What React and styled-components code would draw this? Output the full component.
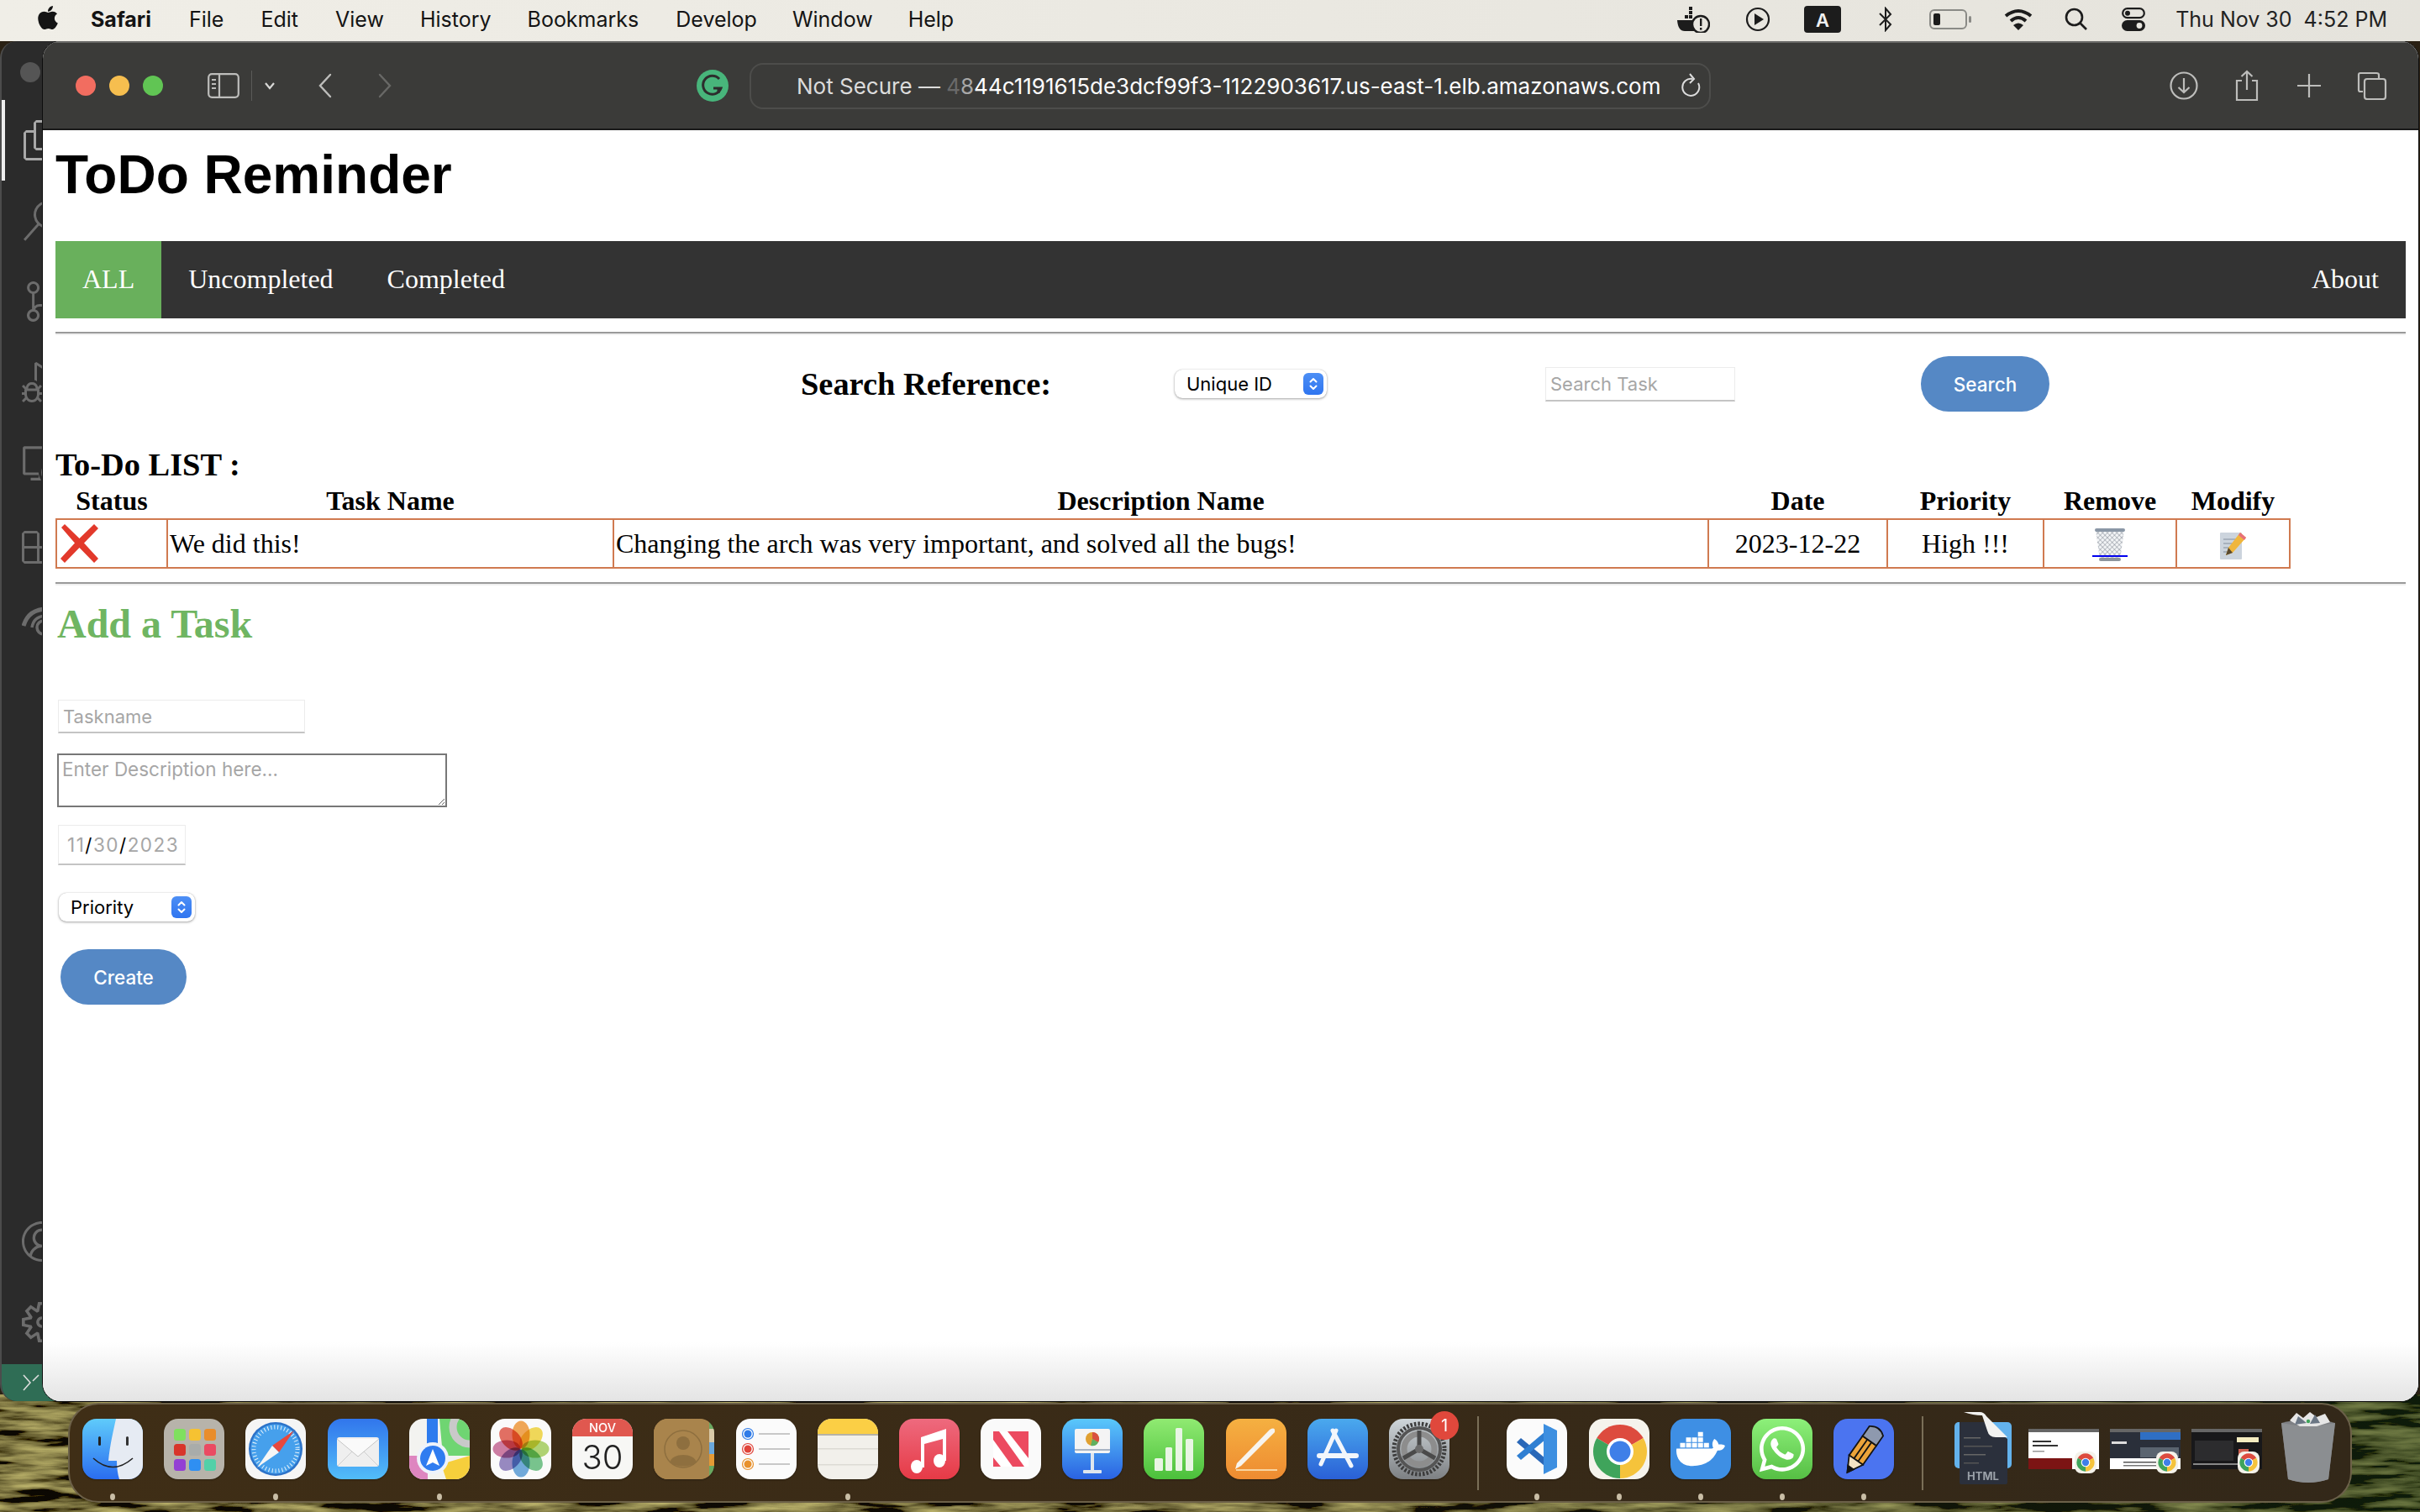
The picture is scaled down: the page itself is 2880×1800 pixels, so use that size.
import React from "react";
import styled, { createGlobalStyle } from "styled-components";
import { FaApple, FaDocker, FaWhatsapp } from "react-icons/fa";
import { VscFiles, VscSearch, VscSourceControl, VscDebugAlt, VscRemoteExplorer, VscExtensions, VscAccount, VscSettingsGear } from "react-icons/vsc";

const Global = createGlobalStyle`
  html, body { margin: 0; padding: 0; background: #2a2114; }
  * { box-sizing: border-box; }
`;

const SANS = `"Inter", "Liberation Sans", sans-serif`;
const SERIF = `"Liberation Serif", serif`;

const Desktop = styled.div`
  position: relative; width: 2880px; height: 1800px; overflow: hidden;
  display: flex; flex-direction: column; font-family: ${SERIF};
`;
const Wallpaper = styled.svg`position: absolute; left: 0; top: 0; width: 2880px; height: 1800px;`;

const MenuBar = styled.div`
  position: relative; z-index: 3; height: 49px; flex: none; display: flex; align-items: center;
  background: linear-gradient(to right, #f0eee7, #e5e3dc);
  padding: 0 39px 3px 41px; font: 400 25px ${SANS}; color: #141414;
`;
const AppleMark = styled.span`display: flex; margin-right: 35px; font-size: 32px; margin-top: -4px;`;
const MenuItem = styled.span`margin-right: ${p => p.$gap}px; font-weight: ${p => (p.$bold ? 700 : 400)}; white-space: nowrap;`;
const StatusArea = styled.div`margin-left: auto; display: flex; align-items: center; height: 100%;`;
const StatusIcon = styled.svg`display: block; margin-right: ${p => p.$gap}px; flex: none;`;
const Clock = styled.span`font-size: 25px; color: #222; white-space: pre; margin-left: 4px;`;

const CodeWindow = styled.div`
  position: absolute; left: 0; top: 49px; width: 120px; height: 1619px; z-index: 1;
  background: #2b2b2b; border-radius: 20px 0 0 20px; overflow: hidden; border-left: 2px solid #4c4c4c;
  display: flex; flex-direction: column;
`;
const CodeDot = styled.div`position: absolute; left: 22px; top: 25px; width: 24px; height: 24px; border-radius: 50%; background: #555;`;
const ActiveMark = styled.div`position: absolute; left: -2px; top: 70px; width: 6px; height: 96px; background: #eee;`;
const ActivityGroup = styled.div`display: flex; flex-direction: column; margin-top: ${p => p.$top}px;`;
const ActivityItem = styled.div`
  width: 96px; height: 96px; display: flex; align-items: center; justify-content: center;
  color: ${p => (p.$on ? "#a8a8a8" : "#6c6c6c")}; font-size: 48px;
`;
const CodeStatus = styled.div`
  margin-top: auto; height: 44px; background: #2f6d55; color: #ddd; display: flex; align-items: center; padding-left: 24px;
`;

const SafariWindow = styled.div`
  position: absolute; left: 50px; top: 48px; width: 2829px; height: 1621px; z-index: 2;
  border-radius: 22px; overflow: hidden; border: 1px solid #0d0d0d;
  display: flex; flex-direction: column; background: #fff;
`;
const Toolbar = styled.div`
  height: 106px; flex: none; background: #3b3b39; border-top: 2px solid #6a6a68; border-bottom: 2px solid #1a1a1a;
  display: flex; align-items: center; padding-left: 39px; color: #bdbdbb;
`;
const Light = styled.span`
  width: 24px; height: 24px; border-radius: 50%; background: ${p => p.$c}; margin-right: 16px; flex: none;
`;
const ToolIcon = styled.svg`display: block; flex: none; margin-left: ${p => p.$left || 0}px;`;
const UrlBar = styled.div`
  margin-left: 25px; width: 1144px; height: 55px; border: 2px solid #4d4d4b; border-radius: 16px;
  display: flex; align-items: center; padding-left: 54px; font: 400 26px ${SANS}; color: #fff; white-space: pre;
`;
const UrlDim = styled.span`color: ${p => p.$c};`;
const ReloadSpot = styled.span`margin-left: auto; margin-right: 10px; display: flex;`;
const ToolRight = styled.div`margin-left: auto; display: flex; align-items: center; padding-right: 37px;`;

const PageArea = styled.main`
  flex: 1; padding: 0 15px; color: #000;
  background: linear-gradient(to bottom, #fff calc(100% - 70px), #e4e4e4 100%);
`;
const Title = styled.h1`
  margin: 16px 0 0; font: 700 64px/74px "Liberation Sans", Arial, sans-serif;
`;
const NavBar = styled.nav`
  margin-top: 42px; height: 92px; background: #333; display: flex; align-items: stretch;
`;
const NavLink = styled.a`
  display: flex; align-items: center; padding: 0 32px 2px; font-size: 32px; color: #fff;
  background: ${p => (p.$active ? "#69b05c" : "transparent")};
  margin-left: ${p => (p.$end ? "auto" : "0")};
`;
const Rule = styled.hr`
  margin: ${p => p.$top}px 0 0; border: 0; height: 4px;
  border-top: 2px solid #9a9a9a; border-bottom: 2px solid #f0f0f0;
`;
const SearchRow = styled.div`
  margin-top: 25px; height: 66px; display: flex; align-items: center; padding-left: 887px;
`;
const SearchLabel = styled.h3`margin: 0; font: 700 38.4px ${SERIF}; white-space: nowrap; width: 297px;`;
const SelectBox = styled.div`
  width: ${p => p.$w}px; height: 34px; margin-left: ${p => p.$left}px; margin-top: ${p => p.$top || 0}px; border-radius: 9px; background: #fff;
  box-shadow: 0 1px 3px rgba(0,0,0,.35), 0 0 1px rgba(0,0,0,.25);
  display: flex; align-items: center; justify-content: space-between; padding: 0 4px 0 14px;
  font: 400 22px ${SANS}; color: #000; flex: none;
`;
const Stepper = styled.span`
  width: 24px; height: 26px; border-radius: 6px; background: linear-gradient(#4d8ff5, #2f75f0); display: flex;
  align-items: center; justify-content: center;
`;
const TextInput = styled.input`
  display: block; flex: none; width: ${p => p.$w}px; height: ${p => p.$h}px; margin-left: ${p => p.$left}px; margin-top: ${p => p.$top || 0}px;
  border: 1px solid #ececec; border-bottom: 2px solid #c4c4c4; background: #fff; padding: 0 0 0 5px; outline: none;
  font: 400 22px ${SANS}; color: #000;
  &::placeholder { color: #a6a6a6; opacity: 1; }
`;
const Pill = styled.button`
  flex: none; width: ${p => p.$w}px; height: 66px; margin-left: ${p => p.$left}px; margin-top: ${p => p.$top || 0}px;
  border: 0; border-radius: 33px; background: #5588c5; color: #fff; font: 500 22.5px ${SANS};
  display: block; padding: 0;
`;
const ListHeading = styled.h3`margin: 40px 0 0; font: 700 38.4px/46px ${SERIF};`;
const TaskTable = styled.table`
  border-collapse: collapse; table-layout: fixed; width: 2659px; font-size: 32px;
`;
const Head = styled.th`
  height: 42px; padding: 0 0 2px; font-weight: 700; text-align: center; vertical-align: middle; line-height: 36px;
`;
const Cell = styled.td`
  height: 58px; padding: 0 2px; border: 2px solid #d07a50; text-align: ${p => (p.$center ? "center" : "left")}; vertical-align: middle; white-space: nowrap;
`;
const CellIcon = styled.svg`display: ${p => (p.$inline ? "inline-block" : "block")}; vertical-align: middle;`;
const IconLink = styled.a`
  position: relative; display: inline-block; line-height: 0;
  &::after { content: ""; position: absolute; left: -1px; right: -1px; bottom: 5px; height: 2px; background: #0000ee; }
`;
const AddHeading = styled.h2`margin: 19px 0 0 2px; font: 700 48px/54px ${SERIF}; color: #6fb562;`;
const TaskForm = styled.form`display: flex; flex-direction: column; align-items: flex-start; margin-top: 63px;`;
const DescArea = styled.textarea`
  display: block; margin: 24px 0 0 2px; width: 464px; height: 64px; border: 2px solid #777; background: #fff; padding: 3px 4px; outline: none;
  font: 400 22.5px/28px ${SANS}; border-radius: 0;
  &::placeholder { color: #a6a6a6; opacity: 1; }
`;
const DateBox = styled.div`
  margin: 21px 0 0 3px; width: 152px; height: 48px; border: 1px solid #ececec; border-bottom: 2px solid #c4c4c4; display: flex; align-items: center; padding-left: 10px;
  font: 400 22.5px ${SANS}; color: #a6a6a6; letter-spacing: 1.5px;
`;
const DateSlash = styled.span`color: #000;`;

const Dock = styled.div`
  position: absolute; z-index: 4; left: 81px; top: 1670px; width: 2718px; height: 119px;
  border-radius: 36px; border: 2px solid rgba(125,115,90,.75);
  background: linear-gradient(to right, #3f2e16, #3a2b17 40%, #332819);
  display: flex; align-items: flex-start; padding: 17px 0 0 15px; gap: 25.2px;
`;
const DockItem = styled.div`position: relative; width: 72px; flex: none; display: flex; flex-direction: column; align-items: center;`;
const Tile = styled.div`
  width: 72px; height: 72px; border-radius: ${p => (p.$free ? 0 : 17)}px; background: ${p => p.$bg || "transparent"};
  overflow: ${p => (p.$free ? "visible" : "hidden")}; display: flex; align-items: center; justify-content: center; color: #fff;
  box-shadow: ${p => (p.$free ? "none" : "0 1px 2px rgba(0,0,0,.3)")};
`;
const Art = styled.svg`display: block; width: 72px; height: 72px; overflow: visible;`;
const RunDot = styled.span`width: 6px; height: 8px; border-radius: 50%; margin-top: 17px; background: ${p => (p.$on ? "#c9bea6" : "transparent")};`;
const DockRule = styled.div`width: 2px; height: 88px; margin: -3px 8px 0; flex: none; background: #7a6f58;`;
const Badge = styled.span`
  position: absolute; left: 49px; top: -9px; width: 34px; height: 34px; border-radius: 50%; background: #e0483c;
  color: #fff; font: 400 20px/34px ${SANS}; text-align: center;
`;

const ChromeLogo = () => (
  <g>
    <path d="M36 36L8.3 20A32 32 0 0 1 63.7 20Z" fill="#dd4b3e" />
    <path d="M36 36L63.7 20A32 32 0 0 1 36 68Z" fill="#f5c33b" />
    <path d="M36 36L36 68A32 32 0 0 1 8.3 20Z" fill="#3fa45b" />
    <circle cx="36" cy="36" r="16" fill="#fff" />
    <circle cx="36" cy="36" r="12.5" fill="#3f7fe8" />
  </g>
);
const ChromeBadge = () => (
  <g transform="translate(49 39)">
    <rect width="26" height="26" rx="8" fill="#f4f2ea" />
    <g transform="translate(1 1) scale(.333)"><ChromeLogo /></g>
  </g>
);
const petals = ["#f39a3c", "#f2d63e", "#a6d05e", "#62bd7c", "#5a9fd8", "#8878ba", "#c86a96", "#e2584a"];

const Shot = ({ children, top }) => (
  <Art viewBox="0 0 72 72">
    <rect x="-6" y="12" width="84" height="48" fill={top} />
    <rect x="-6" y="12" width="84" height="4" fill="#666" />
    {children}
    <ChromeBadge />
  </Art>
);

const apps = [
  { bg: "linear-gradient(#5fcbfb,#2a6df0)", dot: 1, art: (
    <Art viewBox="0 0 72 72">
      <path d="M40 0H72V72H44C42 66 41 58 41 50H31C33 30 37 14 40 0Z" fill="#e6ebf3" />
      <rect x="19" y="21" width="3" height="11" rx="1.5" fill="#222" /><rect x="52" y="21" width="3" height="11" rx="1.5" fill="#333" />
      <path d="M13 47Q36 68 60 47" fill="none" stroke="#222" strokeWidth="1.6" />
    </Art>) },
  { bg: "#b7b3aa", art: (
    <Art viewBox="0 0 72 72">
      {[["#7fe05e", "#f6c232", "#e98d2b"], ["#d8352b", "#a9acaa", "#ea4a62"], ["#933fd4", "#2f8ff2", "#52d0a8"]].map((row, r) =>
        row.map((c, i) => <rect key={c} x={12 + i * 18} y={12 + r * 18} width="14" height="14" rx="3.5" fill={c} />))}
    </Art>) },
  { bg: "#f5f5f5", dot: 1, art: (
    <Art viewBox="0 0 72 72">
      <circle cx="36" cy="36" r="32" fill="#2d73c9" /><circle cx="36" cy="36" r="29.5" fill="#46a0ec" />
      <circle cx="36" cy="36" r="26" fill="none" stroke="#e6f2fb" strokeWidth="5" strokeDasharray="1 3" />
      <polygon points="58,14 40,40 32,32" fill="#e8483c" /><polygon points="14,58 32,32 40,40" fill="#f6f6f6" />
    </Art>) },
  { bg: "linear-gradient(#3176ec,#52bdf9)", art: (
    <Art viewBox="0 0 72 72">
      <rect x="11" y="22" width="50" height="35" rx="3" fill="#efefef" />
      <path d="M11 24L36 45L61 24" fill="#fafafa" stroke="#c6c6c6" strokeWidth="1" />
      <path d="M12 56L29 39M60 56L43 39" stroke="#cfcfcf" strokeWidth="1" />
    </Art>) },
  { bg: "#f3f3f0", dot: 1, art: (
    <Art viewBox="0 0 72 72">
      <polygon points="36,0 72,0 72,44 40,44" fill="#6fd572" />
      <polygon points="0,44 22,44 22,72 0,72" fill="#de86c0" /><polygon points="38,54 72,44 72,72 44,72" fill="#f6cf3c" />
      <rect x="21" y="0" width="13" height="36" fill="#2d7bee" />
      <circle cx="72" cy="10" r="20" fill="none" stroke="#c9c9c9" strokeWidth="9" />
      <circle cx="28" cy="47" r="19" fill="#eef3fb" /><circle cx="28" cy="47" r="15" fill="#2f7cf0" />
      <polygon points="28,36 36,56 28,52 20,56" fill="#fff" />
    </Art>) },
  { bg: "#fafafa", art: (
    <Art viewBox="0 0 72 72">
      {petals.map((c, i) => <ellipse key={c} cx="36" cy="19" rx="10.5" ry="16.5" fill={c} opacity=".85" style={{ mixBlendMode: "multiply" }} transform={`rotate(${i * 45} 36 36)`} />)}
    </Art>) },
  { bg: "#f7f7f5", art: (
    <Art viewBox="0 0 72 72">
      <rect width="72" height="21" fill="#e0584f" />
      <text x="36" y="16" textAnchor="middle" fontFamily="Inter, sans-serif" fontWeight="500" fontSize="14.5" fill="#fff">NOV</text>
      <text x="36" y="60" textAnchor="middle" fontFamily="Inter, sans-serif" fontWeight="300" fontSize="40" fill="#222">30</text>
    </Art>) },
  { bg: "linear-gradient(to right,#ab864d 92%,#6aa860 92%)", art: (
    <Art viewBox="0 0 72 72">
      <rect x="0" y="0" width="66" height="72" rx="12" fill="#a9844c" />
      <circle cx="35" cy="36" r="22" fill="none" stroke="#8e6f3f" strokeWidth="1.5" />
      <circle cx="35" cy="29" r="8" fill="#8e6f3f" /><path d="M19 52C22 40 48 40 51 52C44 58 26 58 19 52Z" fill="#8e6f3f" />
      <rect x="66" y="12" width="6" height="16" fill="#d9c9a8" /><rect x="66" y="28" width="6" height="14" fill="#6aa7dc" /><rect x="66" y="42" width="6" height="14" fill="#e59a35" />
    </Art>) },
  { bg: "#fbfbfb", art: (
    <Art viewBox="0 0 72 72">
      {[["#2f7be8", 18], ["#e0443a", 36], ["#e8912c", 54]].map(([c, y]) => (
        <g key={c}><circle cx="14" cy={y} r="6.5" fill="none" stroke={c} strokeWidth="1.2" /><circle cx="14" cy={y} r="4.5" fill={c} /><rect x="27" y={y - 1} width="37" height="2" fill="#c8c8c8" /></g>
      ))}
    </Art>) },
  { bg: "#f2f0eb", dot: 1, art: (
    <Art viewBox="0 0 72 72">
      <rect width="72" height="18" fill="#fbcf45" />
      <rect y="18" width="72" height="2" fill="#b6b2a6" />
      <rect y="35" width="72" height="1.5" fill="#dcdad4" /><rect y="54" width="72" height="1.5" fill="#dcdad4" />
    </Art>) },
  { bg: "linear-gradient(#ee6a7e,#e63a46)", art: (
    <Art viewBox="0 0 72 72">
      <path d="M26 22L56 12V50H52V24L30 30V58H26Z" fill="#fff" />
      <ellipse cx="21" cy="57" rx="7" ry="8" fill="#fff" /><ellipse cx="48" cy="50" rx="7" ry="8" fill="#fff" />
    </Art>) },
  { bg: "#fafafa", art: (
    <Art viewBox="0 0 72 72">
      <rect x="15" y="15" width="42" height="42" fill="#ec4a60" />
      <polygon points="22,15 32,15 57,47 57,57 52,57" fill="#fff" />
      <polygon points="15,25 15,46 24,57 38,57" fill="#fff" />
    </Art>) },
  { bg: "linear-gradient(#5ac8fb,#2a62e2)", art: (
    <Art viewBox="0 0 72 72">
      <rect x="15" y="12" width="42" height="29" rx="2" fill="#f4f4f4" /><rect x="15" y="36" width="42" height="2" fill="#a8b4c4" />
      <circle cx="36" cy="24" r="8" fill="#e0a030" /><path d="M36 24V16A8 8 0 0 1 43 28Z" fill="#d85040" /><path d="M36 24L43 28A8 8 0 0 1 34 32Z" fill="#60b060" />
      <rect x="34" y="41" width="4" height="20" fill="#dfe6ee" /><rect x="25" y="61" width="22" height="4" rx="1" fill="#dfe6ee" />
    </Art>) },
  { bg: "linear-gradient(#90ea72,#4bc03b)", art: (
    <Art viewBox="0 0 72 72" fill="#e9f5e4">
      <rect x="13" y="47" width="10" height="15" rx="1.5" /><rect x="26" y="34" width="8" height="28" rx="1.5" />
      <rect x="38" y="11" width="8" height="51" rx="1.5" /><rect x="50" y="24" width="9" height="38" rx="1.5" />
    </Art>) },
  { bg: "linear-gradient(#f5b041,#ee8b31)", art: (
    <Art viewBox="0 0 72 72">
      <path d="M11 60L13 53L52 13Q59 9 58 16L18 56Z" fill="#f7f4ee" />
      <rect x="12" y="60" width="49" height="2" fill="#f8d4a0" />
    </Art>) },
  { bg: "linear-gradient(#4aa9ee,#2a60d6)", art: (
    <Art viewBox="0 0 72 72" stroke="#f2f6fb" strokeWidth="5" strokeLinecap="round">
      <path d="M34 14L16 54" /><path d="M30 14L52 56" strokeWidth="5" /><path d="M14 44H58" strokeWidth="6" />
    </Art>) },
  { bg: "linear-gradient(#cfd6da,#7d8083)", badge: "1", art: (
    <Art viewBox="0 0 72 72" fill="none">
      <circle cx="36" cy="36" r="30" stroke="#3c3c3c" strokeWidth="5" strokeDasharray="2.5 2" />
      <circle cx="36" cy="36" r="25" stroke="#555" strokeWidth="4" /><circle cx="36" cy="36" r="18" stroke="#8d8d8d" strokeWidth="7" />
      <path d="M36 36V14M36 36L17 47M36 36L55 47" stroke="#4a4a4a" strokeWidth="5" />
      <circle cx="36" cy="36" r="5" fill="#6a6a6a" />
    </Art>) },
  { rule: true },
  { bg: "#fbfbfb", dot: 1, art: (
    <Art viewBox="0 0 72 72">
      <polygon points="12,28 17,23 58,57 52,62" fill="#2a68b8" /><polygon points="12,44 17,49 58,15 52,10" fill="#2f7fd2" />
      <polygon points="44,6 60,14 60,58 44,66" fill="#3d8fe0" />
    </Art>) },
  { bg: "#f5f3ec", dot: 1, art: (<Art viewBox="0 0 72 72"><g transform="translate(1 3)"><ChromeLogo /></g></Art>) },
  { bg: "#3e8fe4", dot: 1, art: <FaDocker size={58} /> },
  { bg: "linear-gradient(#8df07a,#56bf44)", dot: 1, art: <FaWhatsapp size={62} /> },
  { bg: "#4b74f0", dot: 1, art: (
    <Art viewBox="0 0 72 72">
      <g transform="rotate(35 36 36)" stroke="#141414" strokeWidth="1.8">
        <rect x="26" y="24" width="20" height="28" fill="#eca43a" />
        <polygon points="26,52 46,52 36,70" fill="#f3e2c4" />
        <polygon points="32,63 40,63 36,70" fill="#141414" />
        <path d="M26 10Q36 2 46 10V24H26Z" fill="#8e99ae" />
        <path d="M33 24V52M39 24V52" fill="none" />
      </g>
    </Art>) },
  { rule: true },
  { free: true, art: (
    <Art viewBox="0 0 72 72">
      <rect x="3" y="4" width="68" height="55" rx="5" fill="#63b2ec" />
      <path d="M9 4H40L66 24V76a2 2 0 0 1-2 2H11a2 2 0 0 1-2-2Z" fill="#2b303c" />
      <path d="M14 -8H33Q38 -8 41 -3L66 22H52Q44 22 42 14L36 -4Q25 -4 14 -8Z" fill="#f2f2f0" />
      <rect x="14" y="22" width="20" height="1.5" fill="#666" /><rect x="14" y="32" width="34" height="1.5" fill="#555" /><rect x="14" y="42" width="26" height="1.5" fill="#666" /><rect x="14" y="52" width="18" height="1.5" fill="#555" />
      <text x="37" y="73" textAnchor="middle" fontFamily="Inter, sans-serif" fontWeight="700" fontSize="13" fill="#9aa0a8">HTML</text>
    </Art>) },
  { free: true, art: (
    <Shot top="#fff">
      <rect x="-1" y="26" width="22" height="2" fill="#333" /><rect x="-1" y="31" width="30" height="2" fill="#333" /><rect x="-1" y="38" width="14" height="1.5" fill="#999" />
      <rect x="-6" y="47" width="52" height="13" fill="#7c1414" />
    </Shot>) },
  { free: true, art: (
    <Shot top="#fff">
      <rect x="-6" y="16" width="84" height="31" fill="#2a2f3a" /><rect x="30" y="16" width="48" height="9" fill="#2f6fc4" />
      <rect x="-4" y="27" width="18" height="3" fill="#ddd" /><rect x="30" y="34" width="46" height="12" fill="#5a6470" />
      <rect x="10" y="51" width="54" height="1.5" fill="#555" /><rect x="10" y="55" width="40" height="1.5" fill="#777" />
    </Shot>) },
  { free: true, art: (
    <Shot top="#18181a">
      <rect x="48" y="22" width="26" height="6" fill="#f4ecc0" /><rect x="-2" y="26" width="46" height="24" fill="#2c2c2e" />
      <rect x="50" y="36" width="12" height="18" fill="#d06050" /><rect x="-4" y="53" width="60" height="2" fill="#888" />
    </Shot>) },
  { free: true, art: (
    <Art viewBox="0 0 72 72">
      <path d="M4 5Q36 -3 68 5L60 72Q36 80 12 72Z" fill="#7e8084" />
      <path d="M4 5Q36 12 68 5L60 72Q36 80 12 72Z" fill="#8d8f92" opacity=".9" />
      <path d="M14 2L22 -7L30 -1L38 -8L46 -2L56 -6L62 4L46 9L26 9Z" fill="#e6e6e6" />
      <path d="M24 -3L34 5L20 7ZM44 -5L50 5L38 6Z" fill="#6a7684" /><circle cx="36" cy="3" r="2.2" fill="#3fa45b" />
    </Art>) },
];

const GroupedApps = () => apps.map((a, i) => a.rule ? <DockRule key={i} /> : (
  <DockItem key={i}>
    <Tile $bg={a.bg} $free={a.free}>{a.art}</Tile>
    <RunDot $on={a.dot} />
    {a.badge && <Badge>{a.badge}</Badge>}
  </DockItem>
));

const Updown = ({ w = 12, h = 18 }) => (
  <svg width={w} height={h} viewBox="0 0 12 18" fill="none" stroke="#fff" strokeWidth="2" strokeLinecap="round" strokeLinejoin="round">
    <path d="M2.5 6.5L6 3L9.5 6.5M2.5 11.5L6 15L9.5 11.5" />
  </svg>
);

export default function App() {
  return (
    <Desktop>
      <Global />
      <Wallpaper viewBox="0 0 2880 1800">
        <defs>
          <filter id="vines" x="0" y="0" width="100%" height="100%">
            <feTurbulence type="fractalNoise" baseFrequency="0.012 0.09" numOctaves="4" seed="7" />
            <feColorMatrix type="matrix" values="1.8 0 0 0 -.68  1.7 0 0 0 -.65  .6 0 0 0 -.24  0 0 0 0 1" />
          </filter>
          <linearGradient id="tint" x1="0" x2="1" y1="0" y2="0">
            <stop offset="0" stopColor="#3a280c" stopOpacity=".2" />
            <stop offset=".5" stopColor="#3a2c14" stopOpacity=".25" />
            <stop offset="1" stopColor="#183212" stopOpacity=".55" />
          </linearGradient>
        </defs>
        <rect x="0" y="1660" width="2880" height="140" fill="#241a0c" />
        <rect x="0" y="1660" width="2880" height="140" filter="url(#vines)" />
        <rect x="0" y="1660" width="2880" height="140" fill="url(#tint)" />
      </Wallpaper>

      <MenuBar>
        <AppleMark><FaApple /></AppleMark>
        <MenuItem $bold $gap={45}>Safari</MenuItem>
        <MenuItem $gap={44}>File</MenuItem>
        <MenuItem $gap={44}>Edit</MenuItem>
        <MenuItem $gap={43}>View</MenuItem>
        <MenuItem $gap={43}>History</MenuItem>
        <MenuItem $gap={44}>Bookmarks</MenuItem>
        <MenuItem $gap={42}>Develop</MenuItem>
        <MenuItem $gap={42}>Window</MenuItem>
        <MenuItem $gap={0}>Help</MenuItem>
        <StatusArea>
          <StatusIcon $gap={42} width="40" height="32" viewBox="0 0 40 32" fill="#1c1c1c">
            <path d="M1 17H24V30H10Q2 30 1 17Z" /><rect x="10" y="11" width="4" height="4" /><rect x="15" y="11" width="4" height="4" /><rect x="15" y="6" width="4" height="4" /><rect x="15" y="1" width="4" height="4" />
            <circle cx="29" cy="22" r="10" fill="#e8e6df" stroke="#1c1c1c" strokeWidth="2.4" /><rect x="28" y="15" width="2.4" height="9" /><rect x="28" y="26" width="2.4" height="2.6" />
          </StatusIcon>
          <StatusIcon $gap={40} width="30" height="30" viewBox="0 0 30 30">
            <circle cx="15" cy="15" r="13" fill="none" stroke="#1c1c1c" strokeWidth="2.2" /><polygon points="11,8 22,15 11,22" fill="#1c1c1c" />
          </StatusIcon>
          <StatusIcon $gap={44} width="44" height="32" viewBox="0 0 44 32">
            <rect width="44" height="32" rx="4" fill="#1c1c1c" />
            <text x="22" y="25" textAnchor="middle" fontFamily="Inter, sans-serif" fontWeight="600" fontSize="22" fill="#f0f0f0">A</text>
          </StatusIcon>
          <StatusIcon $gap={43} width="18" height="30" viewBox="0 0 18 30" fill="none" stroke="#1c1c1c" strokeWidth="2">
            <path d="M2 8L15 21L9 28V2L15 9L2 22" />
          </StatusIcon>
          <StatusIcon $gap={39} width="50" height="24" viewBox="0 0 50 24">
            <rect x="1" y="1" width="43" height="22" rx="5" fill="none" stroke="#8a8a86" strokeWidth="2" /><rect x="5" y="5" width="8" height="14" rx="2" fill="#1c1c1c" /><rect x="47" y="8" width="3" height="8" rx="1.5" fill="#8a8a86" />
          </StatusIcon>
          <StatusIcon $gap={38} width="34" height="26" viewBox="0 0 34 26" fill="none" stroke="#1c1c1c" strokeWidth="4">
            <path d="M2 9Q17 -3 32 9" /><path d="M8 15Q17 7 26 15" /><path d="M17 26L11 20Q17 15 23 20Z" fill="#1c1c1c" stroke="none" />
          </StatusIcon>
          <StatusIcon $gap={40} width="28" height="28" viewBox="0 0 28 28" fill="none" stroke="#1c1c1c" strokeWidth="2.6">
            <circle cx="11.5" cy="11.5" r="9.5" /><path d="M18.5 18.5L26 26" />
          </StatusIcon>
          <StatusIcon $gap={32} width="28" height="28" viewBox="0 0 28 28">
            <rect x="1.2" y="1.2" width="25.6" height="11" rx="5.5" fill="none" stroke="#1c1c1c" strokeWidth="2.2" /><circle cx="7" cy="6.7" r="3" fill="#1c1c1c" />
            <rect y="15" width="28" height="13" rx="6.5" fill="#1c1c1c" /><circle cx="21" cy="21.5" r="3.4" fill="#e8e6df" />
          </StatusIcon>
          <Clock>Thu Nov 30  4:52 PM</Clock>
        </StatusArea>
      </MenuBar>

      <CodeWindow>
        <CodeDot />
        <ActiveMark />
        <ActivityGroup $top={70}>
          <ActivityItem $on><VscFiles /></ActivityItem>
          <ActivityItem><VscSearch /></ActivityItem>
          <ActivityItem><VscSourceControl /></ActivityItem>
          <ActivityItem><VscDebugAlt /></ActivityItem>
          <ActivityItem><VscRemoteExplorer /></ActivityItem>
          <ActivityItem><VscExtensions /></ActivityItem>
          <ActivityItem>
            <svg width="48" height="48" viewBox="0 0 48 48" fill="none" stroke="currentColor" strokeWidth="3.5">
              <path d="M2 26Q8 6 30 6" strokeWidth="5" /><circle cx="26" cy="28" r="8" /><path d="M12 28Q14 15 28 14" />
            </svg>
          </ActivityItem>
        </ActivityGroup>
        <ActivityGroup $top={639}>
          <ActivityItem><VscAccount /></ActivityItem>
          <ActivityItem><VscSettingsGear /></ActivityItem>
        </ActivityGroup>
        <CodeStatus>
          <svg width="22" height="22" viewBox="0 0 22 22" fill="none" stroke="#ddd" strokeWidth="1.6"><path d="M2 2L10 11L2 20M20 2L13 9" /></svg>
        </CodeStatus>
      </CodeWindow>

      <SafariWindow>
        <Toolbar>
          <Light $c="#f26d60" /><Light $c="#f6be4f" /><Light $c="#61c554" />
          <ToolIcon $left={37} width="38" height="30" viewBox="0 0 38 30" fill="none" stroke="#bdbdbb" strokeWidth="2.2">
            <rect x="1.2" y="1.2" width="35.6" height="27.6" rx="4" /><path d="M14 1V29" />
            <path d="M5 8H10M5 13H10M5 18H10" strokeWidth="1.8" />
          </ToolIcon>
          <ToolIcon $left={14} width="1" height="36" viewBox="0 0 1 36"><rect width="1" height="36" fill="#5a5a58" /></ToolIcon>
          <ToolIcon $left={15} width="12" height="10" viewBox="0 0 12 10" fill="none" stroke="#d8d8d6" strokeWidth="2.2"><path d="M1 2L6 8L11 2" /></ToolIcon>
          <ToolIcon $left={52} width="16" height="30" viewBox="0 0 16 30" fill="none" stroke="#bdbdbb" strokeWidth="2.4" strokeLinecap="round"><path d="M14 2L2 15L14 28" /></ToolIcon>
          <ToolIcon $left={55} width="16" height="30" viewBox="0 0 16 30" fill="none" stroke="#686866" strokeWidth="2.4" strokeLinecap="round"><path d="M2 2L14 15L2 28" /></ToolIcon>
          <ToolIcon $left={363} width="38" height="38" viewBox="0 0 38 38">
            <circle cx="19" cy="19" r="19" fill="#48b57b" />
            <path d="M27 11A11 11 0 1 0 29 22H20" fill="none" stroke="#2d2d2d" strokeWidth="3" /><path d="M26 21V28" stroke="#2d2d2d" strokeWidth="3" />
          </ToolIcon>
          <UrlBar>
            <UrlDim $c="#dcdcdc">Not Secure — </UrlDim><UrlDim $c="#6a6a6a">4</UrlDim><UrlDim $c="#a8a8a8">8</UrlDim>44c1191615de3dcf99f3-1122903617.us-east-1.elb.amazonaws.com
            <ReloadSpot>
              <svg width="24" height="30" viewBox="0 0 24 30" fill="none" stroke="#dcdcdc" strokeWidth="2">
                <path d="M14 7A10 10 0 1 0 21 12" /><path d="M11 1L16 7L11 12" />
              </svg>
            </ReloadSpot>
          </UrlBar>
          <ToolRight>
            <ToolIcon width="34" height="34" viewBox="0 0 34 34" fill="none" stroke="#bdbdbb" strokeWidth="2.2">
              <circle cx="17" cy="17" r="15.5" /><path d="M17 8V25M10.5 19L17 25L23.5 19" />
            </ToolIcon>
            <ToolIcon $left={43} width="30" height="38" viewBox="0 0 30 38" fill="none" stroke="#bdbdbb" strokeWidth="2.2">
              <path d="M9 13H3V36H27V13H21" /><path d="M15 24V2M8.5 8L15 2L21.5 8" />
            </ToolIcon>
            <ToolIcon $left={45} width="28" height="28" viewBox="0 0 28 28" fill="none" stroke="#bdbdbb" strokeWidth="2.2"><path d="M14 0V28M0 14H28" /></ToolIcon>
            <ToolIcon $left={43} width="36" height="34" viewBox="0 0 36 34" fill="none" stroke="#bdbdbb" strokeWidth="2.2">
              <path d="M7 24H4Q2 24 2 22V4Q2 2 4 2H23Q26 2 26 4V8" /><rect x="9" y="9" width="25" height="24" rx="3" />
            </ToolIcon>
          </ToolRight>
        </Toolbar>

        <PageArea>
          <Title>ToDo Reminder</Title>
          <NavBar>
            <NavLink $active>ALL</NavLink>
            <NavLink>Uncompleted</NavLink>
            <NavLink>Completed</NavLink>
            <NavLink $end>About</NavLink>
          </NavBar>
          <Rule $top={16} />
          <SearchRow>
            <SearchLabel>Search Reference:</SearchLabel>
            <SelectBox $w={181} $left={148}>Unique ID<Stepper><Updown /></Stepper></SelectBox>
            <TextInput $w={226} $h={41} $left={260} placeholder="Search Task" />
            <Pill $w={153} $left={221}>Search</Pill>
          </SearchRow>
          <ListHeading>To-Do LIST :</ListHeading>
          <TaskTable>
            <colgroup>
              <col style={{ width: 132 }} /><col style={{ width: 531 }} /><col style={{ width: 1303 }} /><col style={{ width: 213 }} />
              <col style={{ width: 186 }} /><col style={{ width: 158 }} /><col style={{ width: 135 }} />
            </colgroup>
            <thead>
              <tr>
                <Head>Status</Head><Head>Task Name</Head><Head>Description Name</Head><Head>Date</Head><Head>Priority</Head><Head>Remove</Head><Head>Modify</Head>
              </tr>
            </thead>
            <tbody>
              <tr>
                <Cell>
                  <CellIcon width="49" height="48" viewBox="0 0 49 48">
                    <path d="M3 5L7 1L24.5 18L42 1L47 6L30 23.5L47 42L42 47L24.5 29L7 47L2 42L19 23.5Z" fill="#e2392b" />
                  </CellIcon>
                </Cell>
                <Cell>We did this!</Cell>
                <Cell>Changing the arch was very important, and solved all the bugs!</Cell>
                <Cell $center>2023-12-22</Cell>
                <Cell $center>High !!!</Cell>
                <Cell $center>
                  <IconLink>
                    <CellIcon $inline width="40" height="40" viewBox="0 0 40 40">
                      <defs>
                        <pattern id="mesh" width="4" height="4" patternUnits="userSpaceOnUse" patternTransform="rotate(45)">
                          <path d="M0 0H4M0 0V4" stroke="#6b7280" strokeWidth=".8" />
                        </pattern>
                      </defs>
                      <path d="M3 3H37L32 38H8Z" fill="#f2f4f6" /><path d="M3 3H37L32 38H8Z" fill="url(#mesh)" />
                      <rect x="2" y="1" width="36" height="4" rx="2" fill="#8a97a6" /><rect x="7" y="36" width="26" height="4" rx="2" fill="#8d949c" />
                    </CellIcon>
                  </IconLink>
                </Cell>
                <Cell $center>
                  <CellIcon $inline width="32" height="34" viewBox="0 0 32 34">
                    <rect x="0" y="2" width="26" height="32" rx="1" fill="#ccd4dd" />
                    <path d="M4 10H20M4 15H18M4 20H14M4 25H12" stroke="#9aa5b2" strokeWidth="1.4" />
                    <polygon points="24,2 31,8 15,26 7,29 10,20" fill="#f0b63c" /><polygon points="24,2 31,8 29,11 22,5" fill="#e8707a" /><polygon points="10,20 15,26 7,29" fill="#5a4a30" />
                  </CellIcon>
                </Cell>
              </tr>
            </tbody>
          </TaskTable>
          <Rule $top={16} />
          <AddHeading>Add a Task</AddHeading>
          <TaskForm onSubmit={e => e.preventDefault()}>
            <TextInput $w={294} $h={40} $left={3} placeholder="Taskname" />
            <DescArea placeholder="Enter Description here..." />
            <DateBox>11<DateSlash>/</DateSlash>30<DateSlash>/</DateSlash>2023</DateBox>
            <SelectBox $w={162} $left={4} $top={33}>Priority<Stepper><Updown /></Stepper></SelectBox>
            <Pill $w={150} $left={6} $top={33}>Create</Pill>
          </TaskForm>
        </PageArea>
      </SafariWindow>

      <Dock><GroupedApps /></Dock>
    </Desktop>
  );
}
